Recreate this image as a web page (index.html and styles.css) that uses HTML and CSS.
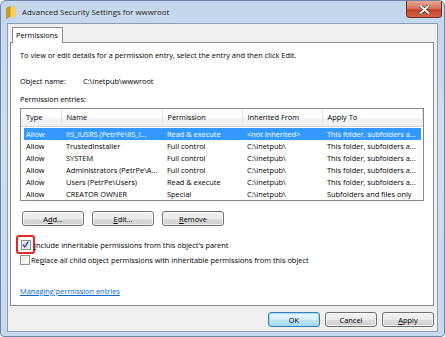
FILE: index.html
```html
<!DOCTYPE html>
<html lang="en">
<head>
    <meta charset="UTF-8">
    <title>Advanced Security Settings for wwwroot</title>
    <link rel="stylesheet" href="styles.css">
</head>
<body>

    <div class="window">
        <div class="titlebar">
            <svg class="title-icon" width="10" height="13" viewBox="0 0 10 13">
                <path d="M0 2 L4 0 L4 11 L0 13 Z" fill="#c89a2a"/>
                <path d="M4 0 L10 1 L10 11 L4 11 Z" fill="#f3cf63"/>
                <path d="M4 0 L5 0.2 L5 11 L4 11 Z" fill="#e0b443"/>
            </svg>
            <span class="title">Advanced Security Settings for wwwroot</span>
            <div class="close-button">
                <svg width="11" height="9" viewBox="0 0 11 9">
                    <path d="M1.5 1 L9.5 8 M9.5 1 L1.5 8" stroke="#5a2a22" stroke-width="3.4" stroke-linecap="round"/>
                    <path d="M1.5 1 L9.5 8 M9.5 1 L1.5 8" stroke="#ffffff" stroke-width="2" stroke-linecap="round"/>
                </svg>
            </div>
        </div>

        <div class="client">
            <div class="tabs">
                <div class="tab">Permissions</div>
            </div>

            <div class="panel">
                <p class="intro">To view or edit details for a permission entry, select the entry and then click Edit.</p>

                <div class="object-row">
                    <span class="object-label">Object name:</span>
                    <span>C:\inetpub\wwwroot</span>
                </div>

                <div class="section-label">Permission entries:</div>

                <div class="listview">
                    <table class="entries">
                        <colgroup>
                            <col class="col-type">
                            <col class="col-name">
                            <col class="col-perm">
                            <col class="col-inh">
                            <col class="col-apply">
                        </colgroup>
                        <thead>
                            <tr>
                                <th>Type</th>
                                <th>Name</th>
                                <th>Permission</th>
                                <th>Inherited From</th>
                                <th>Apply To</th>
                            </tr>
                        </thead>
                        <tbody>
                            <tr class="selected">
                                <td>Allow</td>
                                <td>IIS_IUSRS (PetrPe\IIS_I...</td>
                                <td>Read &amp; execute</td>
                                <td>&lt;not inherited&gt;</td>
                                <td>This folder, subfolders a...</td>
                            </tr>
                            <tr>
                                <td>Allow</td>
                                <td>TrustedInstaller</td>
                                <td>Full control</td>
                                <td>C:\inetpub\</td>
                                <td>This folder, subfolders a...</td>
                            </tr>
                            <tr>
                                <td>Allow</td>
                                <td>SYSTEM</td>
                                <td>Full control</td>
                                <td>C:\inetpub\</td>
                                <td>This folder, subfolders a...</td>
                            </tr>
                            <tr>
                                <td>Allow</td>
                                <td>Administrators (PetrPe\A...</td>
                                <td>Full control</td>
                                <td>C:\inetpub\</td>
                                <td>This folder, subfolders a...</td>
                            </tr>
                            <tr>
                                <td>Allow</td>
                                <td>Users (PetrPe\Users)</td>
                                <td>Read &amp; execute</td>
                                <td>C:\inetpub\</td>
                                <td>This folder, subfolders a...</td>
                            </tr>
                            <tr>
                                <td>Allow</td>
                                <td>CREATOR OWNER</td>
                                <td>Special</td>
                                <td>C:\inetpub\</td>
                                <td>Subfolders and files only</td>
                            </tr>
                        </tbody>
                    </table>
                </div>

                <div class="list-buttons">
                    <button class="btn btn-list">A<u>d</u>d...</button>
                    <button class="btn btn-list"><u>E</u>dit...</button>
                    <button class="btn btn-list"><u>R</u>emove</button>
                </div>

                <div class="check-row first">
                    <span class="highlight">
                        <span class="checkbox checked">
                            <svg width="7" height="7" viewBox="0 0 7 7">
                                <path d="M0.8 3.6 L2.8 6 L6.2 0.6" fill="none" stroke="#2d3f8f" stroke-width="1.3"/>
                            </svg>
                        </span>
                    </span>
                    <span class="check-label"><u>I</u>nclude inheritable permissions from this object's parent</span>
                </div>

                <div class="check-row second">
                    <span class="checkbox"></span>
                    <span class="check-label">Re<u>p</u>lace all child object permissions with inheritable permissions from this object</span>
                </div>

                <a class="help-link" href="#">Managing permission entries</a>
            </div>

            <div class="dialog-buttons">
                <button class="btn btn-dialog default">OK</button>
                <button class="btn btn-dialog">Cancel</button>
                <button class="btn btn-dialog"><u>A</u>pply</button>
            </div>
        </div>
    </div>

</body>
</html>
```

FILE: styles.css
```css
* {
    margin: 0;
    padding: 0;
    box-sizing: border-box;
}

body {
    width: 445px;
    height: 337px;
    overflow: hidden;
    background: #ffffff;
    font-family: "Open Sans", "Noto Sans", sans-serif;
    font-size: 7.4px;
    color: #000000;
}

u {
    text-decoration: underline;
    text-underline-offset: 1px;
}

.window {
    width: 445px;
    height: 337px;
    display: flex;
    flex-direction: column;
    background: linear-gradient(180deg, #c3d6ec 0%, #cfdff0 40%, #c6d9ee 100%);
    border: 1px solid #6f85a3;
    border-radius: 6px 6px 4px 4px;
    padding: 0 6px 4px 6px;
}

/* Title bar */
.titlebar {
    height: 22px;
    display: flex;
    align-items: center;
    position: relative;
    flex-shrink: 0;
}

.title-icon {
    margin-left: -1px;
    margin-right: 6px;
}

.title {
    font-size: 7.9px;
    color: #1b1b1b;
    text-shadow: 0 0 6px rgba(255, 255, 255, 0.9);
}

.close-button {
    position: absolute;
    top: 0;
    right: -4px;
    width: 36px;
    height: 17px;
    border: 1px solid #7a2b22;
    border-top: none;
    border-radius: 0 0 4px 4px;
    background: linear-gradient(180deg, #e8a593 0%, #d8775e 45%, #c4432a 55%, #d0654a 100%);
    display: flex;
    align-items: center;
    justify-content: center;
}

/* Client area */
.client {
    flex: 1;
    background: #f0f0f0;
    border: 1px solid #8c9eb6;
    display: flex;
    flex-direction: column;
    padding: 2px 3px 0 2px;
}

.tabs {
    display: flex;
    height: 16px;
    padding-left: 2px;
}

.tab {
    background: #ffffff;
    border: 1px solid #898c95;
    border-bottom: none;
    padding: 0 4px 0 3px;
    line-height: 15px;
    position: relative;
    top: 1px;
    z-index: 1;
}

.panel {
    height: 264px;
    background: #ffffff;
    border: 1px solid #898c95;
    padding: 6px 9px 0 9px;
    display: flex;
    flex-direction: column;
}

.intro {
    line-height: 12px;
}

.object-row {
    margin-top: 14px;
    line-height: 12px;
    display: flex;
}

.object-label {
    width: 63px;
}

.section-label {
    margin-top: 6px;
    line-height: 12px;
}

/* List view */
.listview {
    margin-top: 3px;
    width: 404px;
    height: 93px;
    border: 1px solid #828790;
    background: #ffffff;
    overflow: hidden;
}

.entries {
    width: 100%;
    table-layout: fixed;
    border-collapse: collapse;
}

.col-type { width: 40px; }
.col-name { width: 101px; }
.col-perm { width: 80px; }
.col-inh { width: 80px; }

.entries th {
    height: 17px;
    font-weight: normal;
    text-align: left;
    padding-left: 5px;
    background: linear-gradient(180deg, #ffffff 0%, #ffffff 50%, #f3f4f6 51%, #eef0f3 100%);
    border-right: 1px solid #e2e5ea;
    border-bottom: 1px solid #d5d5d5;
}

.entries tbody::before {
    content: "";
    display: table-row;
    height: 2px;
}

.entries td {
    height: 12px;
    line-height: 12px;
    padding-left: 5px;
    white-space: nowrap;
    overflow: hidden;
    text-overflow: clip;
}

.entries tr.selected td {
    background: #3399ff;
    color: #ffffff;
}

.entries tr.selected td:first-child {
    box-shadow: inset 3px 0 0 #ffffff;
}

.entries tr.selected td:last-child {
    box-shadow: inset -2px 0 0 #ffffff;
}

/* Buttons */
.btn {
    font-family: inherit;
    font-size: 7.4px;
    color: #000000;
    border: 1px solid #707070;
    border-radius: 3px;
    background: linear-gradient(180deg, #f2f2f2 0%, #ebebeb 50%, #dddddd 51%, #cfcfcf 100%);
    box-shadow: inset 0 0 0 1px rgba(255, 255, 255, 0.7);
    height: 15px;
    line-height: 12px;
}

.list-buttons {
    display: flex;
    gap: 8px;
    margin-top: 10px;
    padding-left: 2px;
}

.btn-list {
    width: 62px;
}

/* Checkboxes */
.check-row {
    display: flex;
    align-items: center;
    line-height: 12px;
}

.check-row.first {
    margin-top: 9px;
    margin-left: -4px;
}

.check-row.first .check-label {
    margin-left: -1px;
}

.check-row.second {
    margin-top: 0;
}

.highlight {
    width: 19px;
    height: 19px;
    border: 2px solid #e0282a;
    border-radius: 3px;
    display: flex;
    align-items: center;
    justify-content: center;
}

.checkbox {
    width: 10px;
    height: 10px;
    border: 1px solid #8f8f8f;
    background: linear-gradient(135deg, #dcdcdc 0%, #f4f4f4 60%, #ffffff 100%);
    box-shadow: inset 0 0 0 1px #f4f4f4;
    display: flex;
    align-items: center;
    justify-content: center;
    flex-shrink: 0;
}

.checkbox.checked {
    background: linear-gradient(135deg, #c9d6e8 0%, #eef3fa 100%);
}

.check-row.second .check-label {
    margin-left: 1px;
}

.help-link {
    margin-top: 19px;
    color: #0066cc;
    line-height: 12px;
    align-self: flex-start;
    text-decoration: underline;
}

/* Dialog footer */
.dialog-buttons {
    display: flex;
    justify-content: flex-end;
    gap: 5px;
    padding-top: 6px;
}

.btn-dialog {
    width: 52px;
}

.btn-dialog.default {
    border-color: #3c7fb1;
    box-shadow: inset 0 0 0 1px #9fd6f3;
    background: linear-gradient(180deg, #eaf6fd 0%, #d9f0fc 50%, #bee6fd 51%, #a7d9f5 100%);
}
```
